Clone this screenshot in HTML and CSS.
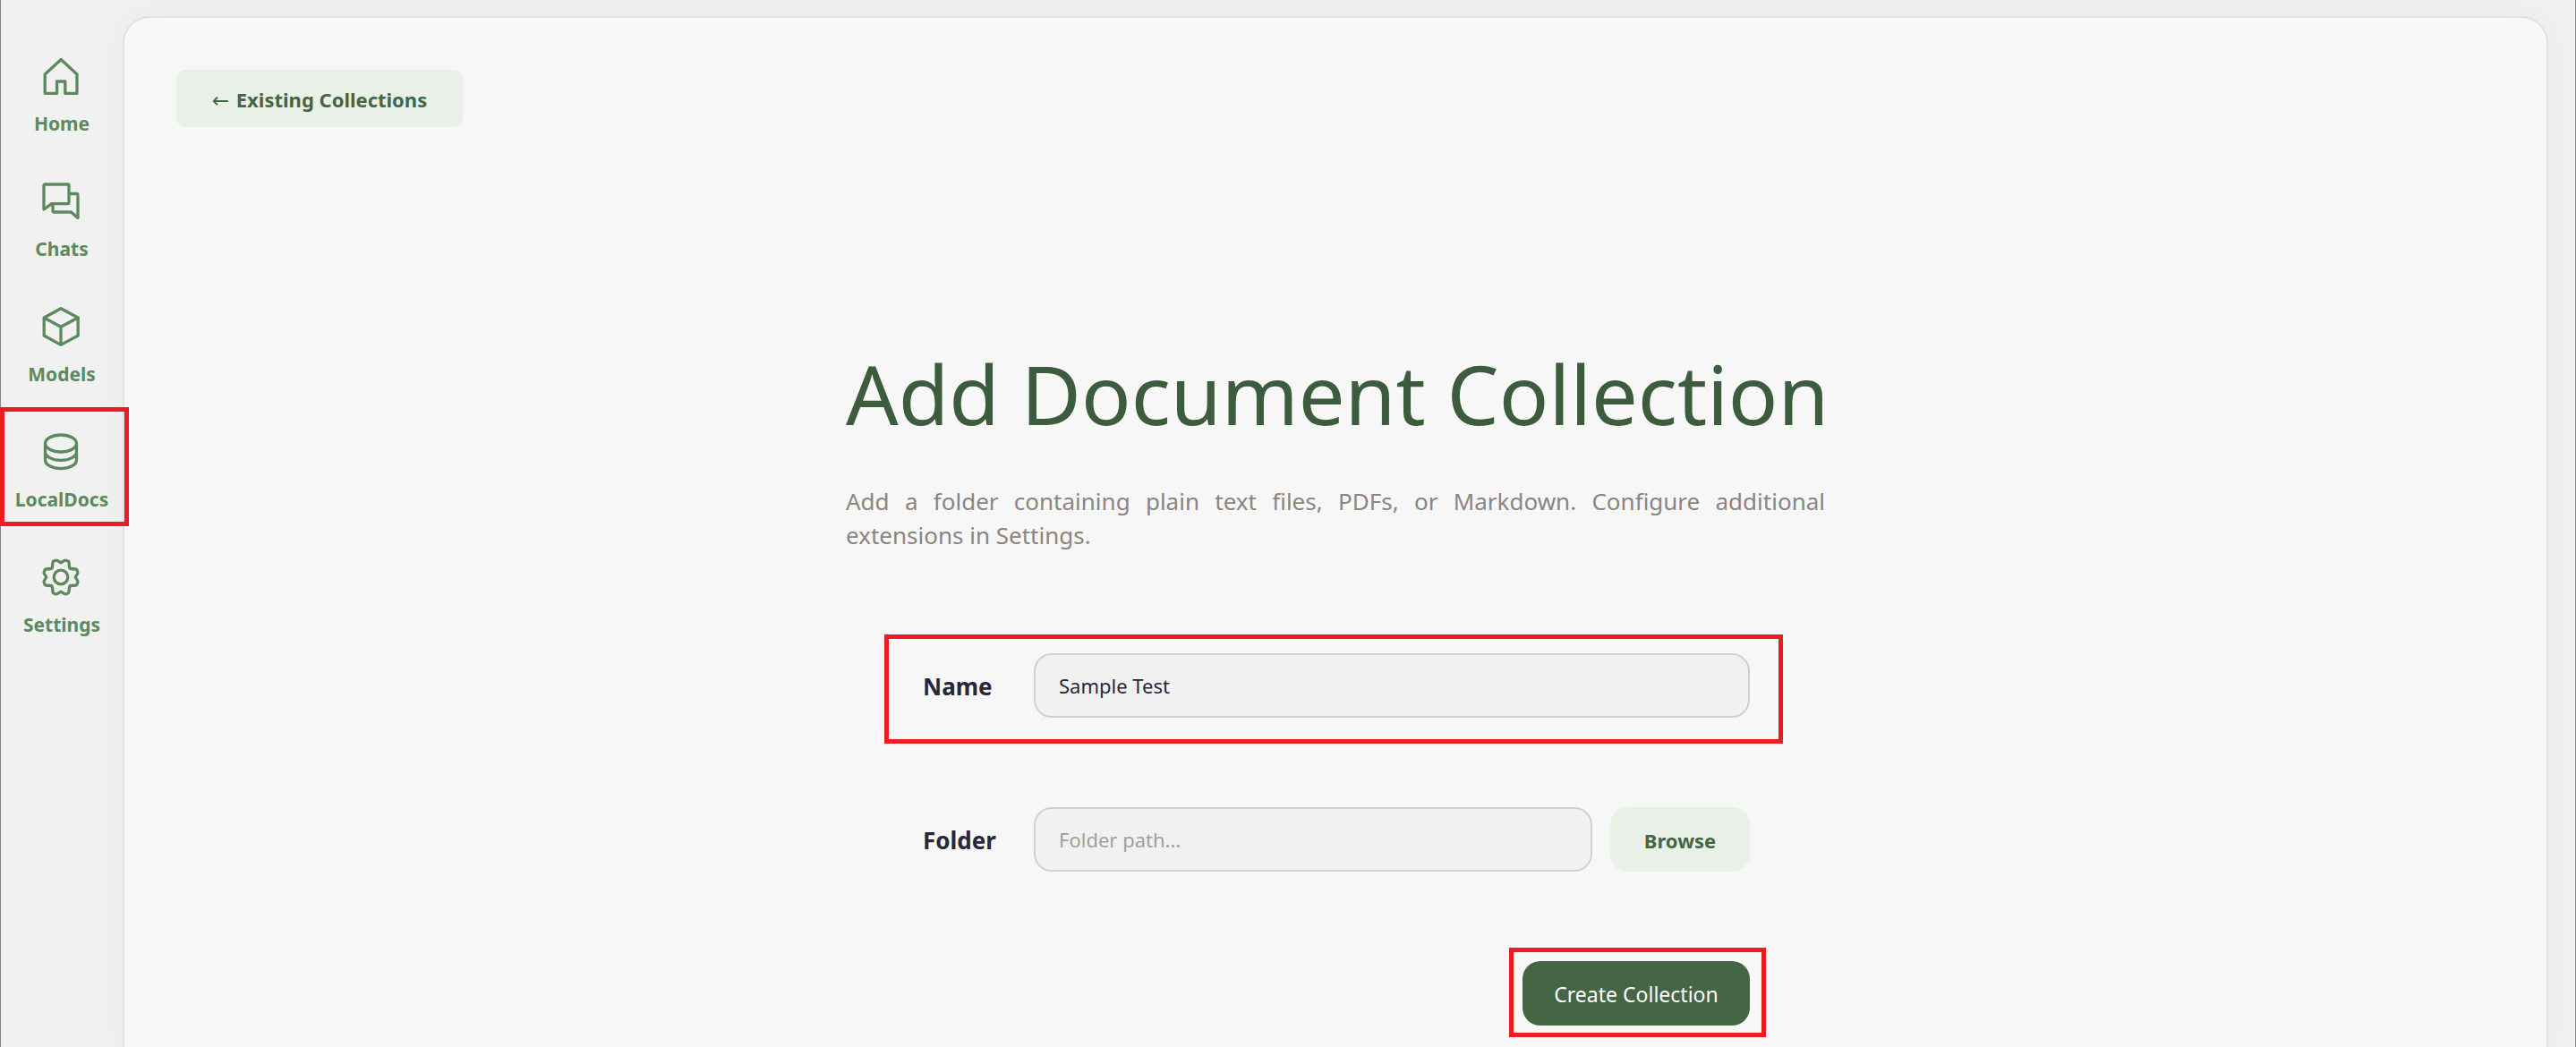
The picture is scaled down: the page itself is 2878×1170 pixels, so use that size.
FILE: index.html
```html
<!DOCTYPE html>
<html lang="en">
<head>
<meta charset="utf-8">
<title>Add Document Collection</title>
<link rel="stylesheet" href="styles.css">
</head>
<body>
<div class="app">
  <nav class="sidebar">
    <a class="nav-item" href="#home">
      <svg class="icon" viewBox="1 0 48 48"><path d="M24.2 5.500 42 22V43.300H28.800V30H19.600V43.300H6.200V22Z"/></svg>
      <span>Home</span>
    </a>
    <a class="nav-item" href="#chats">
      <svg class="icon" viewBox="1 0 48 48"><path d="M6.500 5H31.500Q33 5 33 6.500V25Q33 26.600 31.500 26.600H13.700L5 33V6.500Q5 5 6.500 5ZM33 15.500H41.500Q43 15.500 43 17V42.500L35.500 36H16.500Q15 36 15 34.500V26.600"/></svg>
      <span>Chats</span>
    </a>
    <a class="nav-item" href="#models">
      <svg class="icon" viewBox="1 0 48 48"><path d="M24 3.700 43.200 14V34L24 44.400 5.200 34V14ZM5.200 14 24 24.300 43.200 14M24 24.300V44.400"/></svg>
      <span>Models</span>
    </a>
    <a class="nav-item" href="#localdocs">
      <svg class="icon" viewBox="1 0 48 48"><ellipse cx="24" cy="14.500" rx="17.500" ry="9.500"/><path d="M6.500 14.500V33C6.500 38.300 14.300 42.600 24 42.600S41.500 38.300 41.500 33V14.500M6.500 23.800C6.500 29.100 14.300 33.400 24 33.400S41.500 29.100 41.500 23.800"/></svg>
      <span>LocalDocs</span>
      <i class="marker marker-nav"></i>
    </a>
    <a class="nav-item" href="#settings">
      <svg class="icon" viewBox="1 0 48 48"><path d="M24 7.800 28 5.400Q29 4.900 30 5.300L32 6Q32.900 6.400 33 7.300L33.500 12.500Q33.700 14.300 35.500 14.500L40.700 15Q41.600 15.100 42 16L42.700 18Q43.100 19 42.600 20L40.200 24 42.600 28Q43.100 29 42.700 30L42 32Q41.600 32.900 40.700 33L35.500 33.500Q33.700 33.700 33.500 35.500L33 40.700Q32.900 41.600 32 42L30 42.700Q29 43.100 28 42.600L24 40.200 20 42.600Q19 43.100 18 42.700L16 42Q15.100 41.600 15 40.700L14.500 35.500Q14.300 33.700 12.500 33.500L7.300 33Q6.400 32.900 6 32L5.300 30Q4.900 29 5.400 28L7.800 24 5.400 20Q4.900 19 5.300 18L6 16Q6.400 15.100 7.300 15L12.500 14.500Q14.300 14.300 14.500 12.500L15 7.300Q15.100 6.400 16 6L18 5.300Q19 4.900 20 5.400Z"/><circle cx="24" cy="24" r="7.800"/></svg>
      <span>Settings</span>
    </a>
  </nav>
  <main class="panel">
    <button class="btn btn-back" type="button"><span class="arrow">←</span> Existing Collections</button>
    <form class="collection">
      <h1>Add Document Collection</h1>
      <p>Add a folder containing plain text files, PDFs, or Markdown. Configure additional extensions in Settings.</p>
      <div class="fields">
        <div class="field">
          <label for="name">Name</label>
          <input id="name" type="text" value="Sample Test">
          <i class="marker marker-field"></i>
        </div>
        <div class="field">
          <label for="folder">Folder</label>
          <input id="folder" type="text" placeholder="Folder path...">
          <button class="btn" type="button">Browse</button>
        </div>
        <div class="actions">
          <button class="btn btn-primary" type="submit">Create Collection</button>
          <i class="marker marker-action"></i>
        </div>
      </div>
    </form>
  </main>
</div>
</body>
</html>
```
FILE: styles.css
```css
* { box-sizing: border-box; }

body {
  margin: 0;
  background: #f1f1f1;
  font-family: "Noto Sans", "Open Sans", sans-serif;
}

.app {
  display: flex;
  min-height: 100vh;
  border: solid #858585;
  border-width: 0 1px;
}

.sidebar {
  position: relative;
  z-index: 1;
  display: flex;
  flex-direction: column;
  gap: 49px;
  width: 136px;
  flex: none;
  padding-top: 61px;
}

.nav-item {
  position: relative;
  display: flex;
  flex-direction: column;
  align-items: center;
  gap: 15px;
  color: #5c8a5e;
  font-size: 21px;
  font-weight: 700;
  line-height: 28px;
  text-decoration: none;
}

.icon {
  width: 48px;
  height: 48px;
  fill: none;
  stroke: currentColor;
  stroke-width: 3.3;
  stroke-linejoin: round;
}

.panel {
  flex: 1;
  margin: 18px 30px 0 0;
  padding: 58px 58px 0;
  border: 2px solid #e6e0e1;
  border-bottom: 0;
  border-radius: 30px 30px 0 0;
  background: #f7f7f7;
  box-shadow: 0 0 36px rgba(120, 40, 70, 0.05);
}

.btn {
  min-width: 156px;
  height: 72px;
  padding: 2px 35px 0;
  border: 0;
  border-radius: 20px;
  background: #e8f0e8;
  color: #446644;
  font: 700 22px/32px "Noto Sans", "Open Sans", sans-serif;
  white-space: nowrap;
}

.btn-back {
  display: block;
  min-width: 320px;
  height: 64px;
  border-radius: 10px;
}

.arrow {
  margin-right: 2px;
  font: 400 23px/32px "DejaVu Sans", sans-serif;
}

.btn-primary {
  min-width: 254px;
  background: #446644;
  color: #fff;
  font-size: 23px;
  font-weight: 400;
}

.collection {
  max-width: 1094px;
  margin: 234px auto 0;
}

h1 {
  margin: 0;
  color: #3d5b3d;
  font-size: 92px;
  font-weight: 400;
  line-height: 128px;
  white-space: nowrap;
}

p {
  margin: 37px 0 0;
  color: #8c857f;
  font-size: 26px;
  line-height: 38px;
  text-align: justify;
}

.fields {
  display: flex;
  flex-direction: column;
  gap: 100px;
  margin-top: 113px;
  padding: 0 84px 0 86px;
}

.field {
  position: relative;
  display: flex;
  align-items: center;
  gap: 20px;
}

label {
  width: 104px;
  flex: none;
  padding-top: 2px;
  color: #26283a;
  font-size: 26px;
  font-weight: 700;
}

input {
  flex: 1;
  min-width: 0;
  height: 72px;
  padding: 0 26px;
  border: 2px solid #d0d0d0;
  border-radius: 20px;
  background: #f1f1f1;
  color: #26283a;
  font: 22px/30px "Noto Sans", "Open Sans", sans-serif;
}

input::placeholder {
  color: #a49e99;
  opacity: 1;
}

.actions {
  position: relative;
  align-self: flex-end;
  display: flex;
}

.marker {
  position: absolute;
  border: 5px solid #ed1c24;
  pointer-events: none;
}

.marker-nav { inset: -26px -7px -16px -1px; }
.marker-field { inset: -21px -37px -29px -43px; }
.marker-action { inset: -15px -18px -13px -15px; }
```
